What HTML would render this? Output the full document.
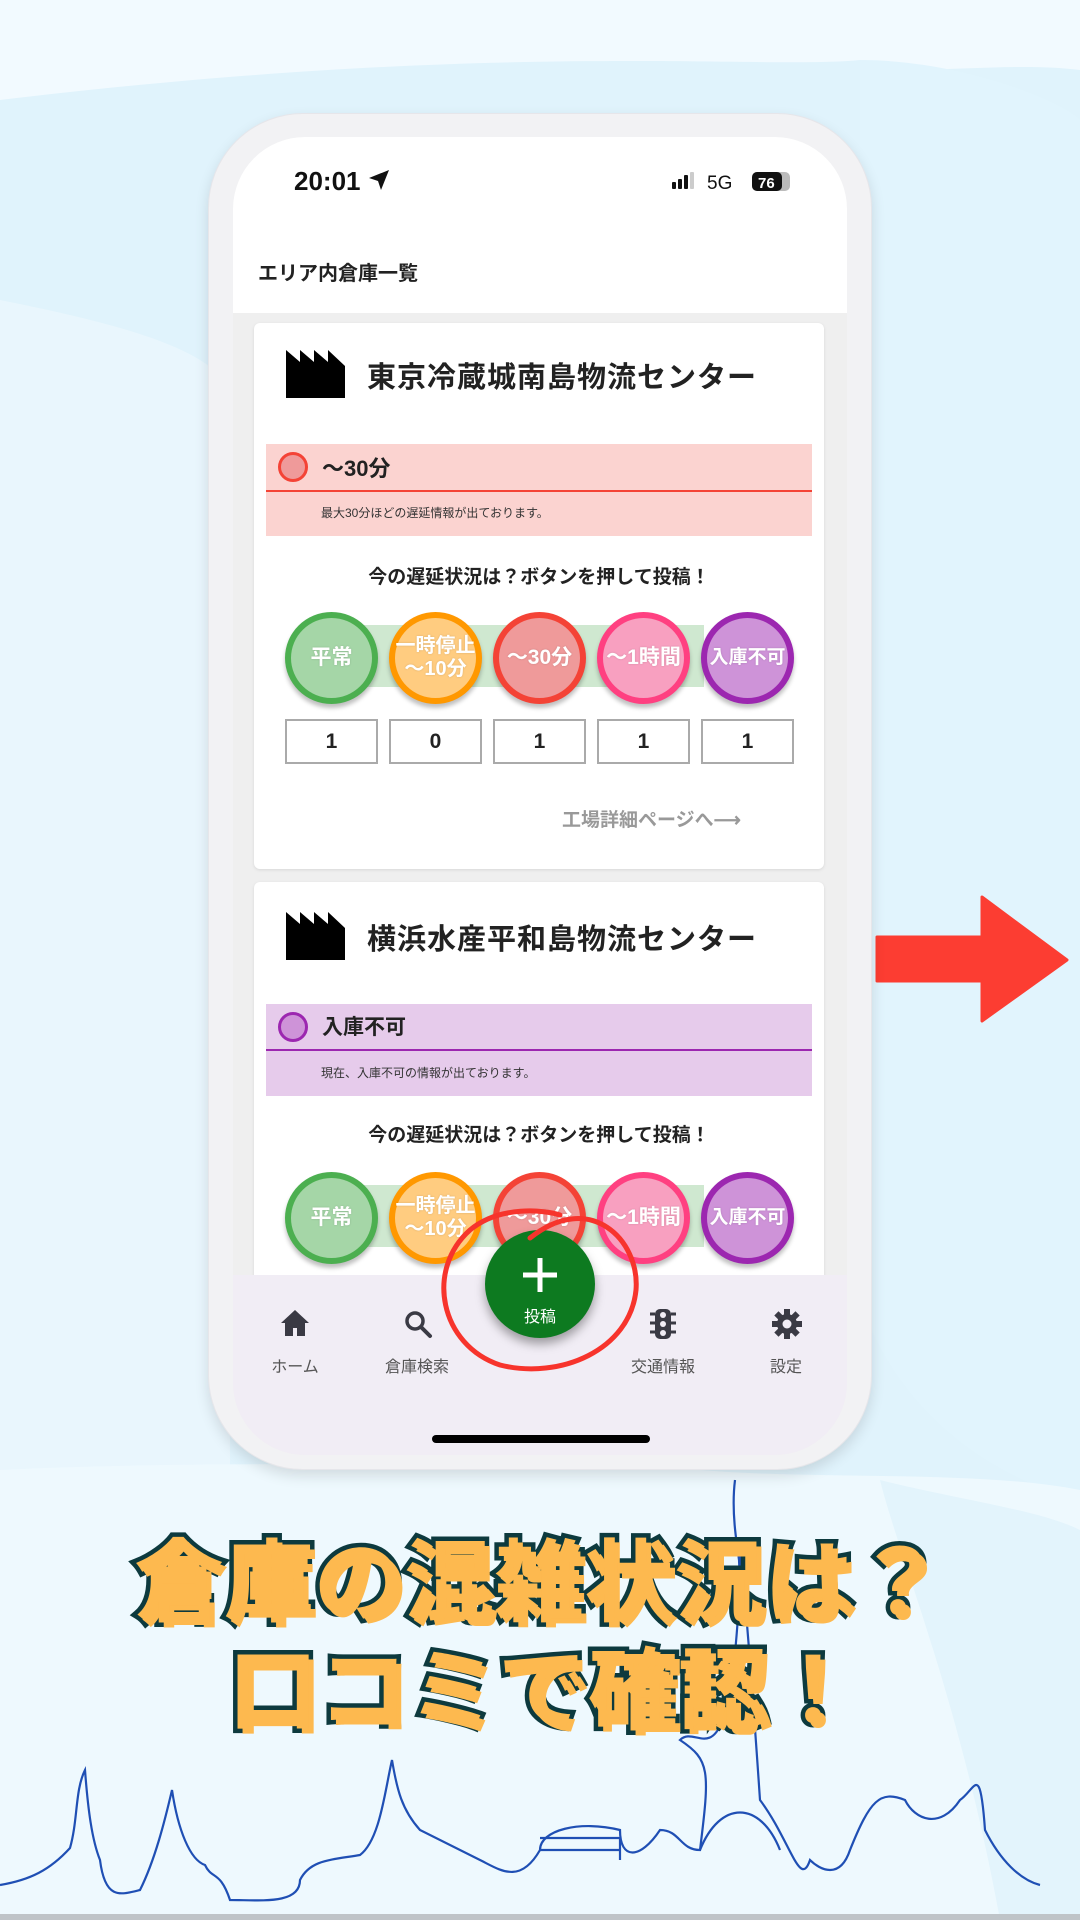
<!DOCTYPE html>
<html><head><meta charset="utf-8"><style>
*{margin:0;padding:0;box-sizing:border-box}
body{width:1080px;height:1920px;position:relative;overflow:hidden;background:#e0f3fc;font-family:"Liberation Sans","Noto Sans CJK JP",sans-serif}
.abs{position:absolute}
.phone{left:208px;top:113px;width:664px;height:1357px;border-radius:95px;background:#f2f2f4;box-shadow:0 6px 14px rgba(0,0,0,.12);border:1px solid #e6e6ea}
.screen{left:233px;top:137px;width:614px;height:1318px;border-radius:72px;background:#efefef;overflow:hidden}
.card{position:absolute;left:21px;width:570px;background:#fff;border-radius:6px;box-shadow:0 1px 3px rgba(0,0,0,.1)}
.title{position:absolute;left:113px;font-size:29px;font-weight:bold;color:#222;letter-spacing:1px}
.banner{position:absolute;left:12px;width:546px}
.btns{position:absolute;left:0;width:570px;height:92px}
.band{position:absolute;left:110px;top:13px;width:340px;height:62px;background:#cfe8d0}
.b{position:absolute;top:0;width:93px;height:92px;border-radius:50%;border:6px solid;color:#fff;font-weight:bold;font-size:21px;display:flex;align-items:center;justify-content:center;text-align:center;line-height:1.15;text-shadow:0 0 2px rgba(0,0,0,.15);box-shadow:0 4px 4px rgba(0,0,0,.25)}
.cnt{position:absolute;top:0;width:93px;height:45px;border:2px solid #aaa;font-size:21px;font-weight:bold;display:flex;align-items:center;justify-content:center;color:#222}
.prompt{position:absolute;left:0;width:570px;text-align:center;font-size:19px;font-weight:bold;color:#222}
.nav{position:absolute;left:0;top:1138px;width:614px;height:180px;background:#f1edf5}
.lbl{position:absolute;top:1216px;font-size:16px;color:#555;transform:translateX(-50%);white-space:nowrap}
.big{position:absolute;font-size:90px;font-weight:bold;color:#fdb94f;-webkit-text-stroke:9px #0d3a3e;paint-order:stroke fill;letter-spacing:0px;text-shadow:5px 5px 0 #fdb94f;white-space:nowrap;font-family:"Noto Sans CJK JP",sans-serif}
</style></head><body>
<svg class="abs" style="left:0;top:0" width="1080" height="1920">
<path d="M0 0H1080V70C1000 60 900 80 860 60 760 70 500 40 0 100Z" fill="#f2faff"/>
<path d="M0 300C150 330 250 360 230 420L230 1700 0 1700Z" fill="#e9f6fd"/>
<path d="M860 60C960 60 1060 100 1080 120V1500C1000 1480 900 1420 860 1300Z" fill="#e1f4fd"/>
<path d="M0 1470C200 1460 500 1465 700 1470 820 1480 980 1470 1080 1490V1920H0Z" fill="#eef9fe"/>
<path d="M880 1480C960 1500 1040 1510 1080 1530V1920H1000C960 1700 900 1560 880 1480Z" fill="#e3f4fc"/>
<path d="M877 937H982V897L1067 960 982 1021V981H877Z" fill="#fc3d32" stroke="#fc3d32" stroke-width="3" stroke-linejoin="round"/>
<g fill="none" stroke="#1f4fb4" stroke-width="2.2">
<path d="M0 1885C30 1880 50 1870 70 1848 78 1820 75 1790 85 1770 88 1810 92 1840 100 1860 105 1900 120 1895 140 1890 155 1860 165 1820 172 1790 178 1830 190 1860 205 1865 212 1880 220 1870 230 1900 260 1900 300 1905 300 1880 310 1860 330 1860 360 1855 380 1840 385 1790 392 1760 397 1790 402 1810 420 1830 440 1840 460 1850 480 1860 500 1870 520 1885 540 1850 540 1830 580 1820 620 1830 620 1860 640 1860 660 1830 680 1830 680 1850 700 1850 710 1770 710 1760 680 1740 700 1720 730 1800 740 1580 735 1490 745 1580 760 1800 790 1840 800 1890 810 1860 820 1870 840 1880 850 1850 870 1800 880 1790 905 1800 915 1820 940 1830 960 1800 975 1790 980 1760 985 1830 1000 1860 1020 1880 1040 1885 1080 1890"/>
<path d="M700 1850C720 1800 760 1800 780 1850"/>
<path d="M540 1838H620V1860M540 1850H620"/>
<path d="M735 1480C730 1520 740 1560 745 1600"/>
</g>
</svg>
<div class="abs phone"></div>
<div class="abs screen">
 <div style="position:absolute;left:0;top:0;width:614px;height:176px;background:#fff"></div>
 <div style="position:absolute;left:61px;top:29px;font-size:26px;font-weight:bold;color:#111">20:01</div>
 <svg style="position:absolute;left:135px;top:32px" width="22" height="22" viewBox="0 0 22 22"><path d="M21 1 1 9l9 3 3 9z" fill="#111"/></svg>
 <svg style="position:absolute;left:439px;top:34px" width="120" height="22">
  <rect x="0" y="11" width="4" height="7" rx="1" fill="#111"/><rect x="6" y="8" width="4" height="10" rx="1" fill="#111"/><rect x="12" y="4" width="4" height="14" rx="1" fill="#111"/><rect x="18" y="1" width="4" height="17" rx="1" fill="#ccc"/>
  <text x="35" y="18" font-size="19" font-family="Liberation Sans" fill="#111">5G</text>
  <rect x="80" y="1" width="38" height="19" rx="5" fill="#bbb"/><rect x="80" y="1" width="30" height="19" rx="5" fill="#111"/>
  <text x="86" y="17" font-size="15" font-weight="bold" font-family="Liberation Sans" fill="#fff">76</text>
 </svg>
 <div style="position:absolute;left:25px;top:120px;font-size:20px;font-weight:bold;color:#222">エリア内倉庫一覧</div>

 <div class="card" style="top:186px;height:546px">
  <svg style="position:absolute;left:32px;top:27px" width="59" height="48" viewBox="0 0 59 48"><path d="M0 0 14 12V0l14 12V0l14 12V0l17 16V48H0Z" fill="#000"/></svg>
  <div class="title" style="top:31px">東京冷蔵城南島物流センター</div>
  <div class="banner" style="top:121px;height:92px;background:#fbd3d0">
   <div style="position:absolute;left:12px;top:8px;width:30px;height:30px;border-radius:50%;background:#ef9a9a;border:3px solid #f44336"></div>
   <div style="position:absolute;left:56px;top:7px;font-size:22px;font-weight:bold;color:#222">〜30分</div>
   <div style="position:absolute;left:0;top:46px;width:546px;height:2px;background:#f44336"></div>
   <div style="position:absolute;left:55px;top:60px;font-size:12px;color:#333">最大30分ほどの遅延情報が出ております。</div>
  </div>
  <div class="prompt" style="top:239px">今の遅延状況は？ボタンを押して投稿！</div>
  <div class="btns" style="top:289px">
   <div class="band"></div>
   <div class="b" style="left:31px;background:#a5d6a7;border-color:#4caf50">平常</div>
   <div class="b" style="left:135px;background:#ffcc80;border-color:#ff9800;font-size:20px">一時停止<br>〜10分</div>
   <div class="b" style="left:239px;background:#ef9a9a;border-color:#f44336">〜30分</div>
   <div class="b" style="left:343px;background:#f8a0c0;border-color:#ff4081">〜1時間</div>
   <div class="b" style="left:447px;background:#ce93d8;border-color:#9c27b0;font-size:19px">入庫不可</div>
  </div>
  <div class="btns" style="top:396px">
   <div class="cnt" style="left:31px">1</div><div class="cnt" style="left:135px">0</div><div class="cnt" style="left:239px">1</div><div class="cnt" style="left:343px">1</div><div class="cnt" style="left:447px">1</div>
  </div>
  <div style="position:absolute;left:308px;top:482px;font-size:19px;color:#999;font-weight:bold">工場詳細ページへ⟶</div>
 </div>

 <div class="card" style="top:745px;height:500px">
  <svg style="position:absolute;left:32px;top:30px" width="59" height="48" viewBox="0 0 59 48"><path d="M0 0 14 12V0l14 12V0l14 12V0l17 16V48H0Z" fill="#000"/></svg>
  <div class="title" style="top:34px">横浜水産平和島物流センター</div>
  <div class="banner" style="top:122px;height:92px;background:#e6cbeb">
   <div style="position:absolute;left:12px;top:8px;width:30px;height:30px;border-radius:50%;background:#ce93d8;border:3px solid #9c27b0"></div>
   <div style="position:absolute;left:56px;top:7px;font-size:21px;font-weight:bold;color:#222">入庫不可</div>
   <div style="position:absolute;left:0;top:45px;width:546px;height:2px;background:#9c27b0"></div>
   <div style="position:absolute;left:55px;top:60px;font-size:12px;color:#333">現在、入庫不可の情報が出ております。</div>
  </div>
  <div class="prompt" style="top:238px">今の遅延状況は？ボタンを押して投稿！</div>
  <div class="btns" style="top:290px">
   <div class="band"></div>
   <div class="b" style="left:31px;background:#a5d6a7;border-color:#4caf50">平常</div>
   <div class="b" style="left:135px;background:#ffcc80;border-color:#ff9800;font-size:20px">一時停止<br>〜10分</div>
   <div class="b" style="left:239px;background:#ef9a9a;border-color:#f44336">〜30分</div>
   <div class="b" style="left:343px;background:#f8a0c0;border-color:#ff4081">〜1時間</div>
   <div class="b" style="left:447px;background:#ce93d8;border-color:#9c27b0;font-size:19px">入庫不可</div>
  </div>
 </div>

 <div class="nav"></div>
 <svg style="position:absolute;left:47px;top:1172px" width="30" height="28" viewBox="0 0 30 28"><path d="M15 1 1 14h4v13h8v-8h4v8h8V14h4Z" fill="#3a3a44"/></svg>
 <svg style="position:absolute;left:170px;top:1172px" width="30" height="30" viewBox="0 0 30 30"><circle cx="12" cy="12" r="8" fill="none" stroke="#3a3a44" stroke-width="3.5"/><path d="M18 18l9 9" stroke="#3a3a44" stroke-width="4" stroke-linecap="round"/></svg>
 <svg style="position:absolute;left:416px;top:1171px" width="28" height="32" viewBox="0 0 28 32"><rect x="6" y="1" width="16" height="30" rx="5" fill="#3a3a44"/><path d="M1 6h5M22 6h5M1 15h5M22 15h5M1 24h5M22 24h5" stroke="#3a3a44" stroke-width="3"/><circle cx="14" cy="7" r="3" fill="#f1edf5"/><circle cx="14" cy="16" r="3" fill="#f1edf5"/><circle cx="14" cy="25" r="3" fill="#f1edf5"/></svg>
 <svg style="position:absolute;left:538px;top:1171px" width="32" height="32" viewBox="0 0 32 32"><g fill="#3a3a44"><circle cx="16" cy="16" r="10"/><g id="t"><rect x="13" y="1" width="6" height="8"/><rect x="13" y="23" width="6" height="8"/></g><use href="#t" transform="rotate(45 16 16)"/><use href="#t" transform="rotate(90 16 16)"/><use href="#t" transform="rotate(135 16 16)"/></g><circle cx="16" cy="16" r="4.5" fill="#f1edf5"/></svg>
 <div class="lbl" style="left:62px">ホーム</div>
 <div class="lbl" style="left:184px">倉庫検索</div>
 <div class="lbl" style="left:430px">交通情報</div>
 <div class="lbl" style="left:553px">設定</div>
 <div style="position:absolute;left:252px;top:1093px;width:110px;height:108px;border-radius:50%;background:#0d7a20;box-shadow:0 6px 10px rgba(0,0,0,.35)"></div>
 <svg style="position:absolute;left:287px;top:1118px" width="40" height="40"><path d="M20 3V37M3 20H37" stroke="#fff" stroke-width="5"/></svg>
 <div style="position:absolute;left:307px;top:1166px;transform:translateX(-50%);color:#fff;font-size:16px">投稿</div>
 <div style="position:absolute;left:199px;top:1298px;width:218px;height:8px;border-radius:4px;background:#000"></div>
</div>
<svg class="abs" style="left:0;top:0" width="1080" height="1920">
<path d="M530 1238C590 1190 640 1240 636 1290 630 1350 560 1380 500 1365 440 1345 425 1270 470 1230 500 1205 545 1210 560 1215" fill="none" stroke="#f7342c" stroke-width="5" stroke-linecap="round"/>
<rect x="0" y="1914" width="1080" height="6" fill="#bfc4c8"/>
</svg>
<div class="big" style="left:134px;top:1510px">倉庫の混雑状況は？</div>
<div class="big" style="left:228px;top:1618px">口コミで確認！</div>
</body></html>
